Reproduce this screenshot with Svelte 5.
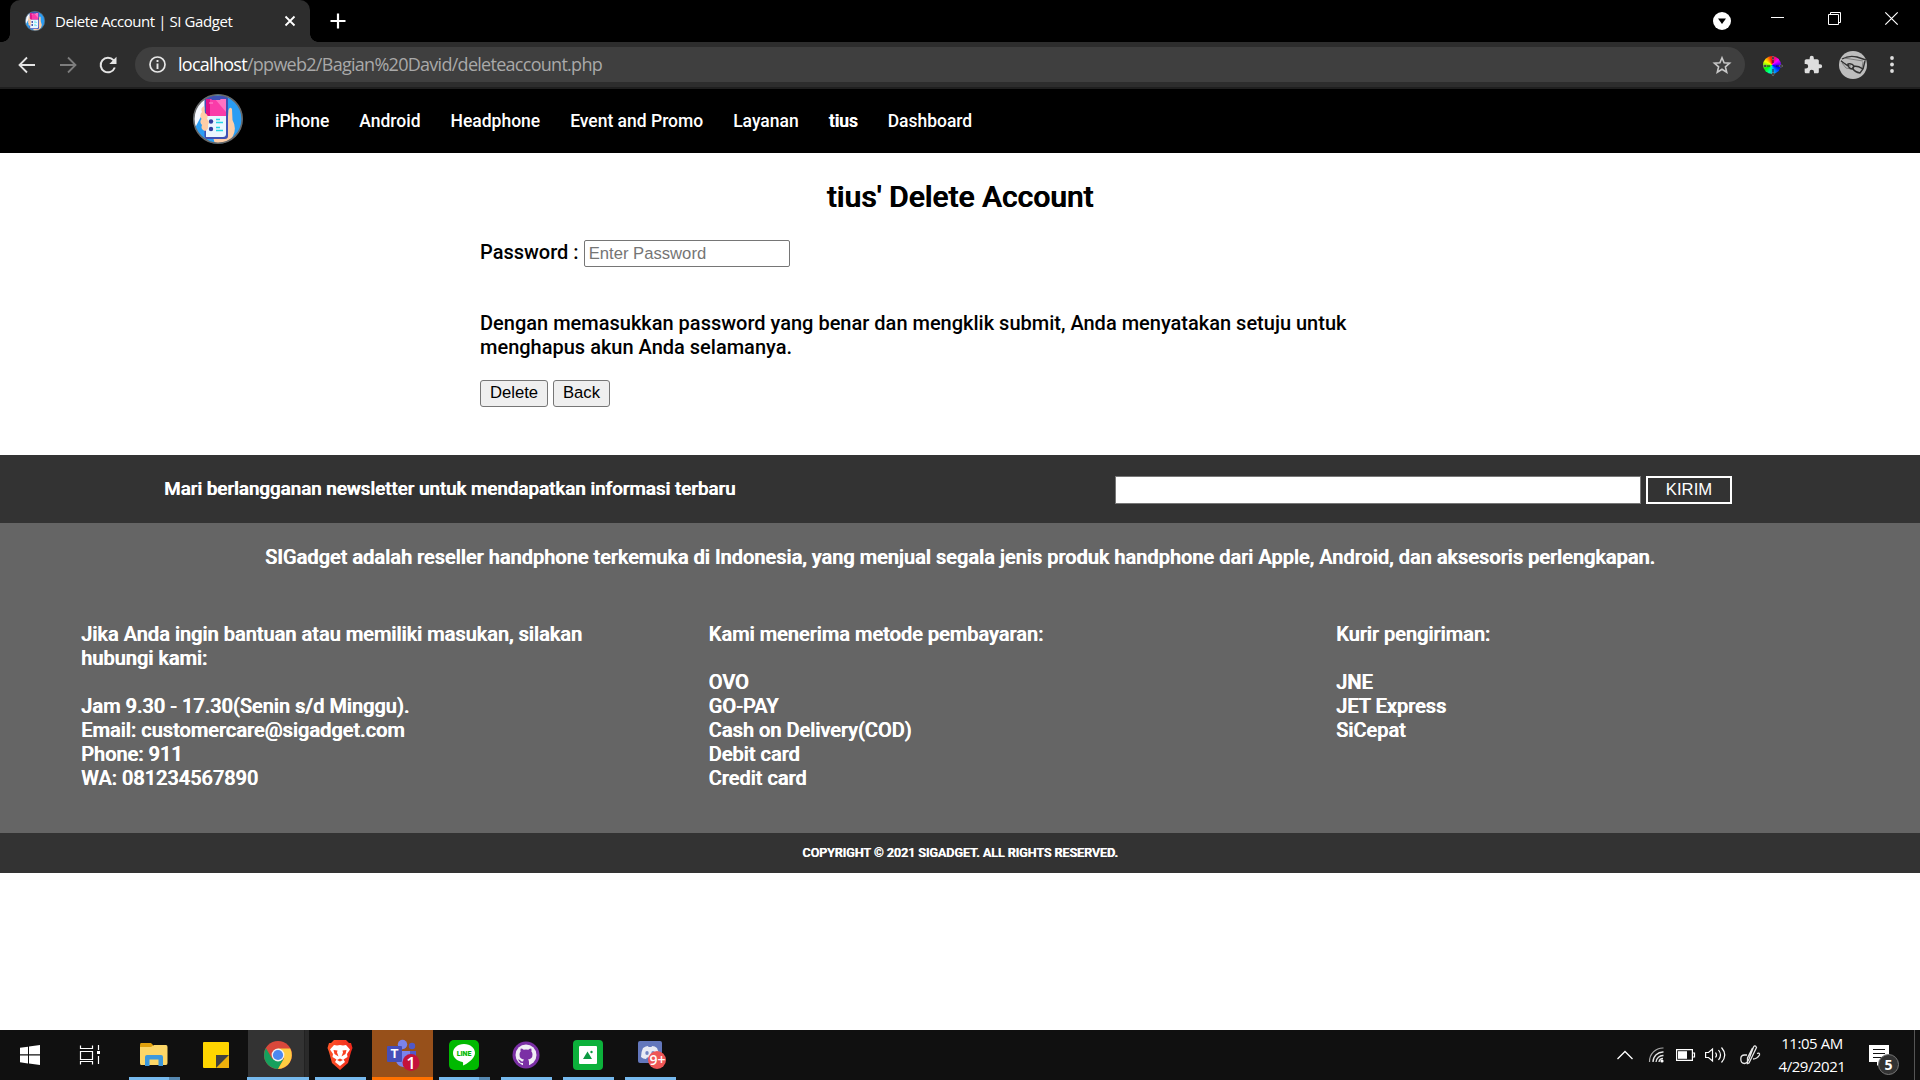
<script>
  const nav = ['iPhone', 'Android', 'Headphone', 'Event and Promo', 'Layanan', 'tius', 'Dashboard'];
  const contact = ['Jam 9.30 - 17.30(Senin s/d Minggu).', 'Email: customercare@sigadget.com', 'Phone: 911', 'WA: 081234567890'];
  const payments = ['OVO', 'GO-PAY', 'Cash on Delivery(COD)', 'Debit card', 'Credit card'];
  const couriers = ['JNE', 'JET Express', 'SiCepat'];
</script>

{#snippet logo(size)}
  <svg width={size} height={size} viewBox="0 0 50 50">
    <defs><clipPath id="disc{size}"><circle cx="25" cy="25" r="24" /></clipPath></defs>
    <circle cx="25" cy="25" r="24.5" fill="#2a9df4" />
    <g clip-path="url(#disc{size})">
      <path d="M0 32C1 15 4 8 14 4L12 15L3 32Z" fill="#f5f8ff" />
      <path d="M20 43Q31 46 34 36L35.500 16Q37 12 39 15L39.500 26Q44 34 40 42L34 50H22Z" fill="#ffcea7" />
      <path d="M11.500 4Q11.500 2 14 2H32Q35 2 35 5V42Q35 45 32 45H14Q11.500 45 11.500 42Z" fill="#3f51b5" />
      <path d="M13 5H33V22H13Z" fill="#fa3ca9" />
      <path d="M13 5H17V22H13Z" fill="#e0108a" />
      <path d="M22 5H33V18Z" fill="#ff72c3" />
      <path d="M16 9H20" stroke="#ff8fd0" stroke-width="1.200" />
      <path d="M17 3H29L27 6H19Z" fill="#3f51b5" />
      <path d="M13 22H33V40Q33 43 30 43H13Z" fill="#eaf7ff" />
      <circle cx="18" cy="27.5" r="2.2" fill="#303f9f" />
      <circle cx="18" cy="35" r="2.2" fill="#303f9f" />
      <path d="M23 25.5H27M23 28.5H30M23 33.5H27M23 36.500H30" stroke="#22d8e8" stroke-width="1.3" />
      <path d="M11 12Q7 14 9 18Q6 21 8.500 25Q6 28 9 31Q7 35 12 37Q16 36 15 31Q17 27 14 25Q16 21 12 19Z" fill="#ffcea7" />
    </g>
    <circle cx="25" cy="25" r="24.200" fill="none" stroke="#686868" stroke-width="1.6" />
  </svg>
{/snippet}

<div class="screen">
  <header class="tabs">
    <div class="tab">
      <i class="foot left"></i>
      <span class="favicon">{@render logo(20)}</span>
      <span class="tab-title">Delete Account | SI Gadget</span>
      <svg class="tab-close" width="12" height="12" viewBox="0 0 12 12"><path d="M1.500 1.500L10.500 10.500M10.500 1.500L1.500 10.500" stroke="#fff" stroke-width="1.800" /></svg>
      <i class="foot right"></i>
    </div>
    <svg class="new-tab" width="16" height="16" viewBox="0 0 16 16"><path d="M8 .5V15.500M.5 8H15.500" stroke="#fff" stroke-width="2.200" /></svg>
    <div class="window-controls">
      <svg width="18" height="18" viewBox="0 0 18 18"><circle cx="9" cy="9" r="9" fill="#fff" /><path d="M5 6.500H13L9 12Z" fill="#000" /></svg>
      <svg width="13" height="13" viewBox="0 0 13 13"><path d="M0 5.500H13" stroke="#fff" /></svg>
      <svg width="13" height="13" viewBox="0 0 13 13"><path d="M.5 2.500H10.500V12.500H.5ZM2.500 2.500V.5H12.500V10.500H10.500" fill="none" stroke="#fff" /></svg>
      <svg width="13" height="13" viewBox="0 0 13 13"><path d="M.3 .3L12.700 12.700M12.700 .3L.3 12.700" stroke="#fff" stroke-width="1.200" /></svg>
    </div>
  </header>

  <div class="toolbar">
    <svg class="back" width="18" height="18" viewBox="0 0 18 18"><path d="M17 9H2M9 1.500L1.500 9L9 16.500" fill="none" stroke="#e4e4e4" stroke-width="1.800" /></svg>
    <svg class="forward" width="18" height="18" viewBox="0 0 18 18"><path d="M1 9H16M9 1.500L16.500 9L9 16.500" fill="none" stroke="#7d7d7d" stroke-width="1.800" /></svg>
    <svg class="reload" width="18" height="18" viewBox="0 0 18 18"><path d="M15.800 11.500A7.300 7.300 0 1 1 14.500 4.200L16 6" fill="none" stroke="#e4e4e4" stroke-width="2" /><path d="M17.500 .8V8H10.300Z" fill="#e4e4e4" /></svg>
    <div class="omnibox">
      <svg width="17" height="17" viewBox="0 0 17 17"><circle cx="8.500" cy="8.500" r="7.500" fill="none" stroke="#e8e8e8" stroke-width="1.700" /><path d="M8.500 7.500V13M8.500 4V6" stroke="#e8e8e8" stroke-width="1.900" /></svg>
      <span class="url"><b>localhost</b>/ppweb2/Bagian%20David/deleteaccount.php</span>
      <svg class="star" width="18" height="18" viewBox="0 0 18 18"><path d="M9 1.700L11.100 6.700L16.600 7.200L12.400 10.800L13.700 16.200L9 13.300L4.300 16.200L5.600 10.800L1.400 7.200L6.900 6.700Z" fill="none" stroke="#c8c8c8" stroke-width="1.600" /></svg>
    </div>
    <div class="extensions">
      <span class="wheel"><svg width="20" height="20" viewBox="0 0 20 20"><path d="M10 0L11.200 2L10 4.500L8.800 2ZM10 20L11.200 18L10 15.500L8.800 18ZM0 10L2 8.800L4.500 10L2 11.200ZM20 10L18 8.800L15.500 10L18 11.200Z" fill="#222" stroke="#999" stroke-width=".5" /><path d="M10 4V7M10 13V16M4 10H7M13 10H16" stroke="#222" /></svg></span>
      <svg width="20" height="20" viewBox="0 0 24 24"><path d="M20.500 11H19V7c0-1.100-.9-2-2-2h-4V3.500a2.500 2.500 0 0 0-5 0V5H4c-1.100 0-2 .9-2 2v3.800h1.500a2.700 2.700 0 0 1 0 5.400H2V20c0 1.100.9 2 2 2h3.800v-1.500a2.700 2.700 0 0 1 5.400 0V22H17c1.100 0 2-.9 2-2v-4h1.500a2.500 2.500 0 0 0 0-5z" fill="#dedede" /></svg>
      <svg width="28" height="28" viewBox="0 0 28 28"><circle cx="14" cy="14" r="14" fill="#bdbdbd" /><path d="M3 8Q10 4 18 6L27 9" fill="none" stroke="#333" stroke-width="1.400" /><path d="M2 9L6 13L12 15M3 12L7 17L12 18M24 11L23 17M5 7L24 10" fill="none" stroke="#777" stroke-width=".9" /><path d="M2 10L9 15M9 13Q13 12 15 15L13 18Q9 17 9 13ZM15 15Q20 15 24 18L21 22Q16 21 14 18ZM24 18L26 10" fill="none" stroke="#333" stroke-width="1.400" /></svg>
      <svg width="4" height="17" viewBox="0 0 4 17"><g fill="#dedede"><circle cx="2" cy="2" r="1.900" /><circle cx="2" cy="8.500" r="1.900" /><circle cx="2" cy="15" r="1.900" /></g></svg>
    </div>
  </div>

  <nav class="site-nav">
    {@render logo(50)}
    <div class="links">
      {#each nav as item}<span class:user={item === 'tius'}>{item}</span>{/each}
    </div>
  </nav>

  <main>
    <h1>tius' Delete Account</h1>
    <form>
      <div class="field"><label for="pw">Password :</label><input id="pw" type="password" placeholder="Enter Password" /></div>
      <p>Dengan memasukkan password yang benar dan mengklik submit, Anda menyatakan setuju untuk<br />menghapus akun Anda selamanya.</p>
      <div class="actions"><button type="button">Delete</button><button type="button">Back</button></div>
    </form>
  </main>

  <section class="newsletter">
    <span>Mari berlangganan newsletter untuk mendapatkan informasi terbaru</span>
    <div class="subscribe"><input aria-label="Email" /><button type="button">KIRIM</button></div>
  </section>

  <footer>
    <p class="about">SIGadget adalah reseller handphone terkemuka di Indonesia, yang menjual segala jenis produk handphone dari Apple, Android, dan aksesoris perlengkapan.</p>
    <div class="columns">
      <div>Jika Anda ingin bantuan atau memiliki masukan, silakan<br />hubungi kami:<br /><br />{#each contact as line}{line}<br />{/each}</div>
      <div>Kami menerima metode pembayaran:<br /><br />{#each payments as line}{line}<br />{/each}</div>
      <div>Kurir pengiriman:<br /><br />{#each couriers as line}{line}<br />{/each}</div>
    </div>
    <p class="copyright">COPYRIGHT © 2021 SIGADGET. ALL RIGHTS RESERVED.</p>
  </footer>

  <div class="taskbar">
    <div class="start">
      <svg width="20" height="20" viewBox="0 0 20 20"><path d="M0 2.800L8 1.700V9.300H0ZM9 1.500L20 0V9.300H9ZM0 10.500H8V18.400L0 17.300ZM9 10.500H20V20L9 18.500Z" fill="#fff" /></svg>
      <svg width="21" height="20" viewBox="0 0 21 20"><path d="M.5 .5V3.500H12.500V.5M.5 6.500H12.500V14.500H.5ZM.5 19.500V16.500H12.500V19.500M18.500 0V5M18.500 11V19" fill="none" stroke="#fff" stroke-width="1.200" /><path d="M17 6H20V9H17Z" fill="#fff" /></svg>
    </div>
    <div class="apps">
      <div class="app run split">
        <svg class="folder" width="30" height="30" viewBox="0 0 30 30"><path d="M2 5Q2 3 3 3H13L15 5V10H2Z" fill="#e0a00c" /><path d="M2 7H13L16 5H28Q29.500 5 29.500 7V23Q29.500 25 28 25H3Q2 25 2 23Z" fill="#fcd667" /><path d="M7 26V17Q7 15 9 15H23Q25 15 25 17V26H20.500V19.500H11.500V26Z" fill="#3c98dc" /></svg>
      </div>
      <div class="app">
        <svg width="30" height="30" viewBox="0 0 30 30"><rect x="2" y="2" width="26" height="26" rx="1" fill="#ffd500" /><path d="M15 28L28 15V27Q28 28 27 28Z" fill="#eeb00b" /><path d="M15 15H28L15 28Z" fill="#404040" /></svg>
      </div>
      <div class="app active">
        <svg width="28" height="28" viewBox="0 0 28 28"><circle cx="14" cy="14" r="14" fill="#d9483b" /><path d="M1.900 7A14 14 0 0 0 14 28L20 17.500L14 20L8 17.500Z" fill="#16a05d" /><path d="M14 28A14 14 0 0 0 26.200 7.500H14L20 17.500Z" fill="#ffcd41" /><circle cx="14" cy="14" r="6.400" fill="#f2f2f2" /><circle cx="14" cy="14" r="5.100" fill="#4b88ef" /></svg>
      </div>
      <div class="app run">
        <svg width="30" height="30" viewBox="0 0 30 30"><defs><linearGradient id="lion"><stop stop-color="#ff5628" /><stop offset="1" stop-color="#f0281c" /></linearGradient></defs><path d="M9 0H21L24 3L26 3L27.500 8L26 12L23 23L15 30L7 23L4 12L2.500 8L4 3L6 3Z" fill="url(#lion)" /><path d="M9 5L12 5.500L15 5L18 5.500L21 5L25 9.500L22 14L22.500 17L18.500 19.500L20 22L15 26L10 22L11.500 19.500L7.500 17L8 14L5 9.500Z" fill="#fff" /><path d="M8.500 10L12.500 10.500L12 12.500L13.500 16.500L9.500 14ZM21.500 10L17.500 10.500L18 12.500L16.500 16.500L20.500 14ZM12 20L15 18.500L18 20L15 21.500Z" fill="#f94222" /></svg>
      </div>
      <div class="app teams">
        <svg width="32" height="32" viewBox="0 0 32 32"><circle cx="15.500" cy="5.500" r="4.700" fill="#7b83eb" /><circle cx="25" cy="7" r="3.200" fill="#5059c9" /><path d="M20 12H29V21Q27 26 22 25Z" fill="#5059c9" /><path d="M9 12H23V22Q22 29 16 28Q10 27 9 22Z" fill="#7b83eb" /><rect x="0" y="7" width="15" height="16" rx="1" fill="#464eb8" /><text x="7.500" y="19" class="mark">T</text><circle cx="24" cy="23.500" r="8.500" fill="#c4123a" /><text x="24" y="29.500" class="one">1</text></svg>
      </div>
      <div class="app run split">
        <svg width="30" height="30" viewBox="0 0 30 30"><rect width="30" height="30" rx="5" fill="#00b900" /><path d="M15 4C8.500 4 4 8 4 13C4 17.500 8 21 13.500 22C14.500 22.500 14 24 14 25.500C18 24 26 18.500 26 13C26 8 21.500 4 15 4Z" fill="#fff" /><text x="15" y="16" class="line">LINE</text></svg>
      </div>
      <div class="app run">
        <svg width="28" height="28" viewBox="0 0 28 28"><circle cx="14" cy="14" r="13.500" fill="#7b2fa5" /><circle cx="14" cy="14" r="10.500" fill="#f1eef5" /><path d="M11 26V22Q8.500 22.500 7.500 20.500L6 18.500Q8 18.200 9 20Q10 21 11.200 20.200Q11.300 19.300 12 18.600Q7.500 18 7.500 13.500Q7.500 11.800 8.600 10.600Q8.200 9 8.800 7.600Q10.300 7.700 11.700 8.800Q14 8.200 16.300 8.800Q17.700 7.700 19.200 7.600Q19.800 9 19.400 10.600Q20.500 11.800 20.500 13.500Q20.500 18 16 18.600Q17 19.500 17 21V26Z" fill="#7b2fa5" /></svg>
      </div>
      <div class="app run">
        <svg width="30" height="30" viewBox="0 0 30 30"><rect width="30" height="30" rx="4" fill="#0cb13b" /><rect x="6" y="6" width="18" height="18" rx="1" fill="#fff" /><path d="M10 19L14.500 11.500L19 19Z" fill="#0c9a42" /><circle cx="18.500" cy="12" r="1.200" fill="#0c9a42" /></svg>
      </div>
      <div class="app run">
        <svg class="discord" width="28" height="28" viewBox="0 0 28 28"><path d="M2 0H22Q24 0 24 2V22H2Q0 22 0 20V2Q0 0 2 0Z" fill="#7289da" opacity=".85" /><path d="M5 7Q8 5 10 5L10.500 6H13.500L14 5Q17 5 19 7Q21.500 12 21 16Q19 18 16 18L15 16.500H9L8 18Q5 18 3 16Q3 11 5 7Z" fill="#e9ebf4" /><ellipse cx="9" cy="12" rx="1.700" ry="2" fill="#7285c3" /><ellipse cx="15" cy="12" rx="1.700" ry="2" fill="#7285c3" /><circle cx="19" cy="19" r="9" fill="#ee5656" /><text x="19.500" y="23.500" class="nine">9+</text></svg>
      </div>
    </div>
    <div class="tray">
      <svg width="16" height="10" viewBox="0 0 16 10"><path d="M.5 9L8 1.500L15.500 9" fill="none" stroke="#fff" stroke-width="1.300" /></svg>
      <svg width="17" height="16" viewBox="0 0 17 16"><g fill="none"><path d="M1.500 15A13.500 13.500 0 0 1 15.500 1" stroke="#aaa" stroke-width="1.200" /><path d="M5 15A10 10 0 0 1 15.500 5M8 15A7 7 0 0 1 15.500 8.500M11 15A4 4 0 0 1 15 11.500" stroke="#e6e6e6" stroke-width="1.300" /></g><circle cx="14" cy="14" r="1.600" fill="#fff" /></svg>
      <svg width="19" height="12" viewBox="0 0 19 12"><path d="M.6 .6H16.400V11.400H.6ZM17 4H18.500V8H17" fill="none" stroke="#fff" stroke-width="1.200" /><path d="M2 2.200H11V9.800H2Z" fill="#fff" /></svg>
      <svg width="21" height="18" viewBox="0 0 21 18"><g fill="none" stroke="#fff" stroke-width="1.200"><path d="M.6 6.500H3.500L7.500 3V15L3.500 11.500H.6Z" /><path d="M10.500 6.500Q12.500 9 10.500 11.500M13.500 4Q17.500 9 13.500 14M16.500 1.500Q23 9 16.500 16.500" /></g></svg>
      <svg width="21" height="20" viewBox="0 0 21 20"><path d="M7 10H4.500Q.8 10 .8 14Q.8 18.500 4.500 18.500Q7 18.500 9 14L13.500 2Q15-.5 16.500 2.500L9 18L7.500 18.500V13L12.500 3M13 14Q17 14 19.500 10Q20 7.500 17 8.500" fill="none" stroke="#e8e8e8" stroke-width="1.300" /></svg>
    </div>
    <div class="clock"><span>11:05 AM</span><span>4/29/2021</span></div>
    <svg class="notice" width="31" height="32" viewBox="0 0 31 32"><path d="M0 0H20V17H12L8 21V17H0Z" fill="#fff" /><path d="M4 4.500H16M4 8.500H16M4 12.500H16" stroke="#111" stroke-width="1.200" /><circle cx="19.500" cy="19.500" r="10" fill="#333" stroke="#777" /><text x="19.500" y="25" class="five">5</text></svg>
    <i class="peek"></i>
  </div>
</div>

<style>
  :global(body) { margin: 0; background: #fff; overflow: hidden; }
  .screen { width: 1920px; height: 1080px; display: flex; flex-direction: column; font: 500 20px/24px Roboto, sans-serif; color: #000; }
  .screen * { box-sizing: border-box; }
  svg { display: block; flex: none; overflow: visible; }
  p, h1 { margin: 0; }

  .tabs { height: 42px; background: #000; display: flex; align-items: center; flex: none; }
  .tab { position: relative; width: 300px; height: 42px; margin-left: 10px; padding: 0 14px 0 15px; background: #2d2d2d; border-radius: 10px 10px 0 0; display: flex; align-items: center; }
  .foot { position: absolute; bottom: 0; width: 8px; height: 8px; }
  .left { left: -8px; background: radial-gradient(circle at 0 0, #000 7.500px, #2d2d2d 8px); }
  .right { right: -8px; background: radial-gradient(circle at 100% 0, #000 7.500px, #2d2d2d 8px); }
  .tab-title { margin-left: 10px; padding-bottom: 1px; font: 400 15px/20px "Open Sans", sans-serif; letter-spacing: -.43px; color: #fff; flex: 1; white-space: nowrap; }
  .new-tab { margin-left: 19.500px; }
  .window-controls { margin-left: auto; display: flex; align-items: center; gap: 44px; padding: 0 22px 5px 0; }
  .window-controls svg:first-child { margin: 5px -4px 0 0; }

  .toolbar { height: 47px; background: #2d2d2d; border-bottom: 2px solid #1f1f1f; display: flex; align-items: center; padding-left: 18px; flex: none; }
  .forward { margin-left: 23px; }
  .reload { margin-left: 22px; }
  .omnibox { margin-left: 18px; width: 1610px; height: 35px; border-radius: 18px; background: #3f3f3f; display: flex; align-items: center; padding: 0 14px 0 14px; }
  .url { margin-left: 12px; padding-bottom: 1px; font: 400 18px/26px "Open Sans", sans-serif; letter-spacing: -.72px; color: #a9a9a9; flex: 1; white-space: nowrap; }
  .url b { font-weight: 400; color: #fff; }
  .extensions { display: flex; align-items: center; margin-left: 18px; }
  .wheel { display: grid; place-items: center; width: 18px; height: 18px; border-radius: 50%; background: conic-gradient(red, #f0f 50deg, #00f 110deg, #0af 165deg, #0fa 200deg, #0f0 240deg, #ff0 300deg, red); }
  .extensions > svg:nth-child(2) { margin-left: 22px; }
  .extensions > svg:nth-child(3) { margin-left: 16px; }
  .extensions > svg:nth-child(4) { margin-left: 23px; }

  .site-nav { height: 64px; flex: none; background: #000; display: flex; align-items: center; padding: 0 0 4px 193px; color: #fff; }
  .links { display: flex; gap: 30px; margin: 4px 0 0 32px; font-size: 17.500px; letter-spacing: -.01px; }
  .user { text-shadow: .7px 0 #fff; }

  main { height: 302px; flex: none; }
  h1 { font: 500 30px/36px Roboto, sans-serif; text-shadow: .7px 0 #000; text-align: center; padding-top: 26px; }
  form { margin-left: 480px; }
  .field { display: flex; align-items: center; gap: 5px; margin-top: 25px; height: 27px; }
  .field label { padding-bottom: 3px; }
  .field input { width: 206px; height: 27px; padding: 1px 4px; font: 400 16.670px "Liberation Sans", Arial, sans-serif; border: 1px solid #767676; border-radius: 2px; }
  .field input::placeholder { color: #757575; }
  form p { margin-top: 44px; white-space: nowrap; }
  .actions { display: flex; gap: 5px; margin-top: 21px; }
  .actions button { height: 27px; width: 68px; padding: 0 0 1px; font: 400 16.670px "Liberation Sans", Arial, sans-serif; border: 1px solid #767676; border-radius: 3px; background: #efefef; color: #000; }
  .actions button:last-child { width: 57px; }

  .newsletter { height: 68px; flex: none; background: #333; color: #fff; display: flex; justify-content: space-between; align-items: center; padding: 0 188px 0 164px; font-size: 18.750px; }
  .newsletter span, footer { text-shadow: .6px 0 #fff; }
  .subscribe { display: flex; gap: 5px; margin-top: 2px; }
  .subscribe input { width: 526px; height: 28px; border: 1px solid #767676; background: #fff; }
  .subscribe button { width: 86px; height: 28px; padding: 0; background: #333; border: 2px solid #fff; color: #fff; font: 400 16.670px "Liberation Sans", Arial, sans-serif; }

  footer { background: #656565; color: #fff; height: 350px; flex: none; display: flex; flex-direction: column; }
  .about { text-align: center; padding-top: 22px; white-space: nowrap; }
  .columns { display: grid; grid-template-columns: 627.500px 627.500px 1fr; margin-top: 53px; padding-left: 81px; white-space: nowrap; }
  .copyright { margin-top: auto; height: 40px; background: #333; text-align: center; font-size: 12.500px; line-height: 39px; }

  .taskbar { margin-top: auto; height: 50px; background: #101010; display: flex; align-items: center; flex: none; }
  .start { display: flex; gap: 40px; width: 123px; padding-left: 20px; }
  .apps { display: flex; height: 50px; }
  .app { width: 62px; height: 50px; display: flex; align-items: center; justify-content: center; border-bottom: 3px solid transparent; padding-top: 3px; }
  .run { border-bottom: 0; padding-bottom: 3px; background: linear-gradient(#76b9ed, #76b9ed) 6px 47px / 51px 3px no-repeat; }
  .split { background: linear-gradient(90deg, #76b9ed 40px, #5688b0 40px) 6px 47px / 51px 3px no-repeat; }
  .active { background: linear-gradient(90deg, #333 56px, #222 56px, #222 57px, #2a2a2a 57px) 1px 0 / 61px 47px no-repeat; border-bottom-color: #76b9ed; }
  .teams { background: #97501a; border-bottom-color: #ff7100; margin-left: 1px; width: 61px; }
  .folder { margin-right: 2px; }
  .discord { margin-left: 4px; }
  .mark { font: 700 13px Roboto, sans-serif; fill: #fff; text-anchor: middle; }
  .one { font: 600 17px "Open Sans", sans-serif; fill: #fff; text-anchor: middle; }
  .line { font: 900 7px Roboto, sans-serif; fill: #00b900; text-anchor: middle; }
  .nine { font: 600 14px "Open Sans", sans-serif; fill: #fff; text-anchor: middle; }
  .five { font: 700 14px "Open Sans", sans-serif; fill: #fff; text-anchor: middle; }
  .tray { margin-left: auto; display: flex; align-items: center; }
  .tray svg:nth-child(2) { margin-left: 15px; }
  .tray svg:nth-child(3) { margin-left: 11px; }
  .tray svg:nth-child(4) { margin-left: 10px; }
  .tray svg:nth-child(5) { margin-left: 14px; }
  .clock { width: 80px; margin-left: 11px; display: flex; flex-direction: column; align-items: center; font: 400 15px/23px "Open Sans", sans-serif; letter-spacing: -.45px; color: #fff; white-space: nowrap; }
  .notice { margin: 11px 0 0 17px; }
  .peek { width: 1px; height: 50px; margin: 0 5px 0 14px; background: #555; }
</style>
